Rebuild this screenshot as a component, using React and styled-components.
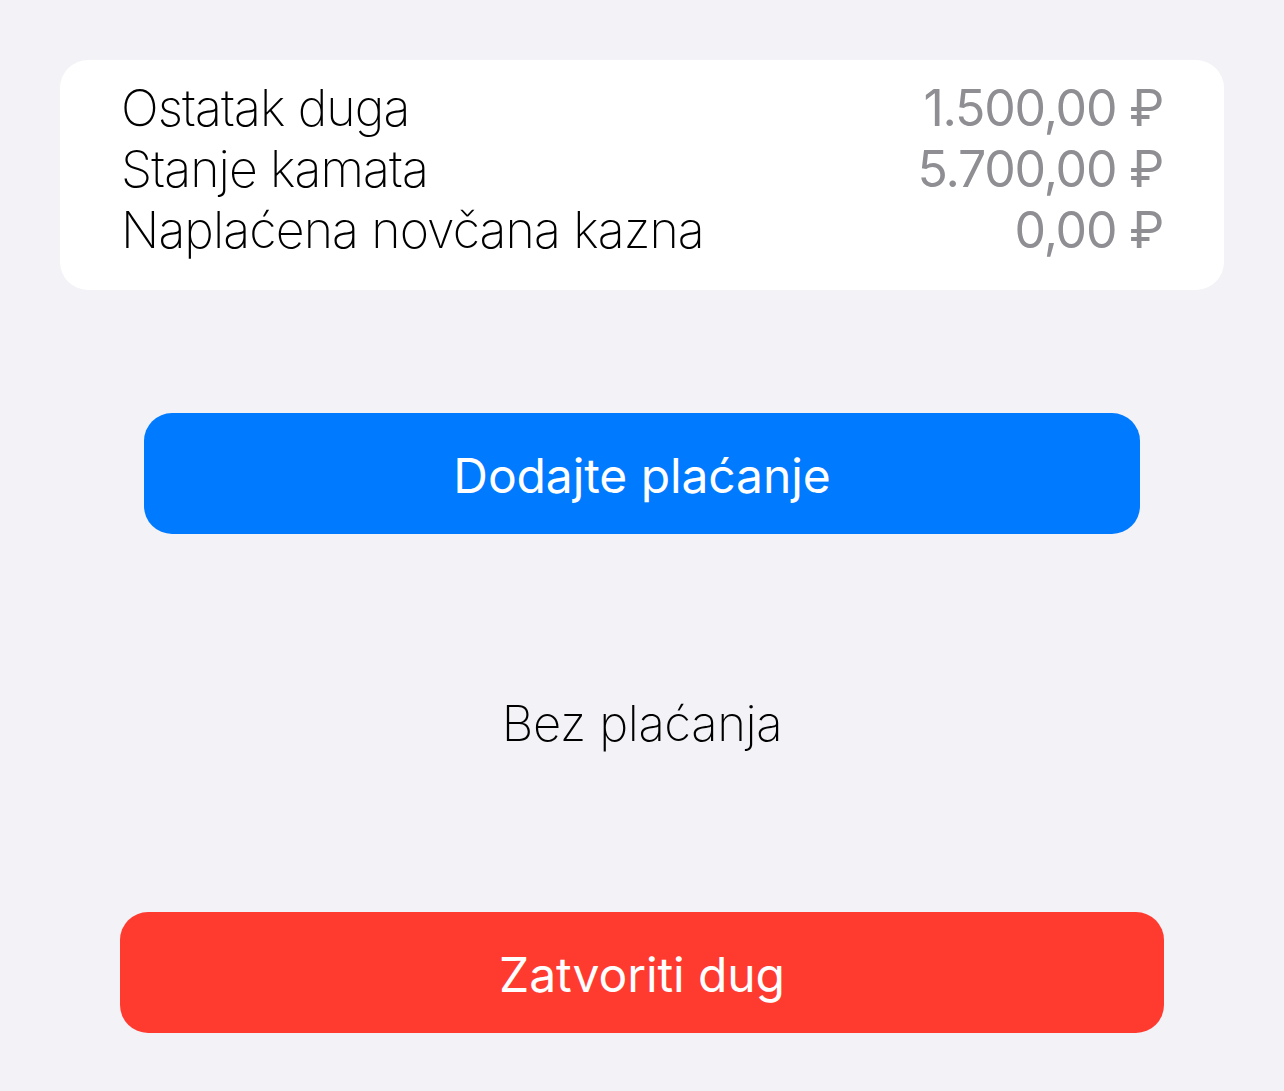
import React from 'react'
import styled, { createGlobalStyle } from 'styled-components'

const GlobalStyle = createGlobalStyle`
    html, body {
        margin: 0;
        padding: 0;
        background: #f2f2f7;
    }

    body {
        font-family: Inter, "Noto Sans", "Liberation Sans", sans-serif;
        -webkit-font-smoothing: antialiased;
    }
`

const rows = [
    { label: 'Ostatak duga', value: '1.500,00 ₽' },
    { label: 'Stanje kamata', value: '5.700,00 ₽' },
    { label: 'Naplaćena novčana kazna', value: '0,00 ₽' }
]

const App = () => {
    return (
        <Page>
            <GlobalStyle />
            <Card>
                {rows.map(row => (
                    <Row key={row.label}>
                        <Label>{row.label}</Label>
                        <Value>{row.value}</Value>
                    </Row>
                ))}
            </Card>

            <Button $color="#007aff" $inset={84} $top={123}>Dodajte plaćanje</Button>

            <Empty>Bez plaćanja</Empty>

            <Button $color="#ff3b30" $inset={60}>Zatvoriti dug</Button>
        </Page>
    )
}

export default App

const Page = styled.div`
    display: flex;
    flex-direction: column;
    padding: 60px 60px 0;
    min-height: 1091px;
    box-sizing: border-box;
`

const Card = styled.section`
    background: #ffffff;
    border-radius: 28px;
    padding: 18px 61px 29px;
    display: flex;
    flex-direction: column;
`

const Row = styled.div`
    display: flex;
    justify-content: space-between;
    align-items: baseline;
    line-height: 61px;
    font-size: 50px;
    letter-spacing: -0.9px;
`

const Label = styled.span`
    font-weight: 200;
    color: #000000;
`

const Value = styled.span`
    font-weight: 400;
    color: #8e8e93;
    letter-spacing: -1.2px;
`

const Button = styled.button`
    height: 121px;
    margin: ${props => props.$top || 0}px ${props => props.$inset}px 0;
    border: none;
    border-radius: 28px;
    background: ${props => props.$color};
    color: #ffffff;
    font-family: inherit;
    font-size: 48px;
    font-weight: 400;
    letter-spacing: -0.1px;
    padding: 4px 0 0;
`

const Empty = styled.p`
    margin: 0;
    height: 378px;
    display: flex;
    align-items: center;
    justify-content: center;
    font-size: 49px;
    font-weight: 200;
    letter-spacing: -0.4px;
    color: #000000;
`
